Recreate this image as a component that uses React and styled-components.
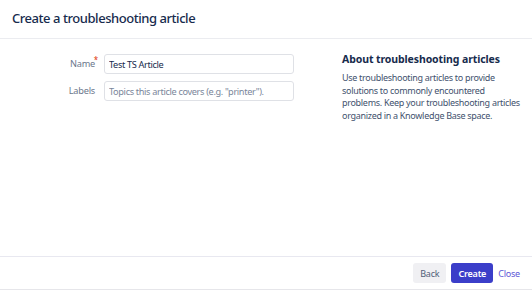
import styled, { createGlobalStyle } from "styled-components";

const GlobalStyle = createGlobalStyle`
  html, body {
    margin: 0;
    padding: 0;
    background: #ffffff;
  }
  body {
    font-family: "Noto Sans", "Open Sans", sans-serif;
    color: #172b4d;
  }
`;

const Dialog = styled.div`
  width: 532px;
  height: 290px;
  display: flex;
  flex-direction: column;
  box-sizing: border-box;
  border-bottom: 1px solid #e6e6ea;
  background: #ffffff;
`;

const Header = styled.div`
  height: 39px;
  box-sizing: border-box;
  display: flex;
  align-items: center;
  padding: 0 12px 2px;
  border-bottom: 1px solid #ebecf0;
`;

const Title = styled.h1`
  margin: 0;
  font-size: 13px;
  font-weight: 500;
  color: #172b4d;
  letter-spacing: -0.45px;
`;

const Body = styled.div`
  flex: 1;
  display: flex;
  gap: 48px;
  padding-top: 15px;
`;

const Form = styled.div`
  display: grid;
  grid-template-columns: 98px 190px;
  column-gap: 6px;
  row-gap: 7px;
  align-content: start;
`;

const Label = styled.label`
  position: relative;
  text-align: right;
  padding-right: 3px;
  font-size: 9.2px;
  letter-spacing: -0.2px;
  line-height: 20px;
  color: #6b778c;
`;

const Required = styled.span`
  position: absolute;
  right: 0;
  top: -4px;
  font-size: 8px;
  color: #de350b;
`;

const Input = styled.input`
  box-sizing: border-box;
  height: 20px;
  width: 190px;
  border: 1px solid #dfe1e6;
  border-radius: 3px;
  padding: 0 4px;
  font-family: inherit;
  font-size: 9.2px;
  letter-spacing: -0.35px;
  color: #172b4d;
  background: #ffffff;
  outline: none;
  &::placeholder {
    color: #7a869a;
  }
`;

const About = styled.div`
  width: 180px;
  margin-top: -3px;
`;

const AboutTitle = styled.h2`
  margin: 0 0 5px;
  font-size: 10.5px;
  font-weight: 700;
  letter-spacing: -0.1px;
  color: #172b4d;
  line-height: 16px;
`;

const AboutText = styled.p`
  margin: 0;
  font-size: 9px;
  letter-spacing: -0.3px;
  line-height: 12.6px;
  color: #42526e;
`;

const Footer = styled.div`
  height: 33px;
  box-sizing: border-box;
  border-top: 1px solid #e8e8f0;
  display: flex;
  justify-content: flex-end;
  align-items: flex-start;
  padding: 6px 12px 0 0;
  gap: 5px;
`;

const Button = styled.button`
  height: 20px;
  border: none;
  border-radius: 3px;
  padding: 0 ${(p) => (p.$variant === "link" ? "0" : "7px")};
  font-family: inherit;
  font-size: 9px;
  letter-spacing: -0.2px;
  font-weight: ${(p) => (p.$variant === "primary" ? 600 : 400)};
  cursor: pointer;
  background: ${(p) =>
    p.$variant === "primary"
      ? "#3b3ec9"
      : p.$variant === "link"
      ? "transparent"
      : "#f0f0f3"};
  color: ${(p) =>
    p.$variant === "primary"
      ? "#ffffff"
      : p.$variant === "link"
      ? "#5d57d6"
      : "#505f79"};
`;

export default function App() {
  return (
    <>
      <GlobalStyle />
      <Dialog>
        <Header>
          <Title>Create a troubleshooting article</Title>
        </Header>
        <Body>
          <Form>
            <Label>
              Name
              <Required>*</Required>
            </Label>
            <Input defaultValue="Test TS Article" />
            <Label>Labels</Label>
            <Input placeholder='Topics this article covers (e.g. "printer").' />
          </Form>
          <About>
            <AboutTitle>About troubleshooting articles</AboutTitle>
            <AboutText>
              Use troubleshooting articles to provide solutions to commonly
              encountered problems. Keep your troubleshooting articles
              organized in a Knowledge Base space.
            </AboutText>
          </About>
        </Body>
        <Footer>
          <Button>Back</Button>
          <Button $variant="primary">Create</Button>
          <Button $variant="link">Close</Button>
        </Footer>
      </Dialog>
    </>
  );
}
